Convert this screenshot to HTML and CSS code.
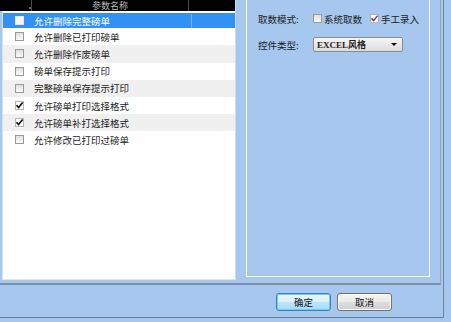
FILE: index.html
```html
<!DOCTYPE html>
<html lang="zh-CN">
<head>
    <meta charset="UTF-8">
    <title>磅单参数设置</title>
    <link rel="stylesheet" href="styles.css">
</head>
<body>

<div class="outer">
    <div class="inner">
        <div class="grid">
            <div class="grid-head">
                <div class="col-check"><span class="dot"></span></div>
                <div class="col-name">参数名称</div>
                <div class="col-rest"></div>
            </div>
            <div class="row selected">
                <div class="col-check"><span class="cb"></span></div>
                <div class="col-name">允许删除完整磅单</div>
                <div class="col-rest"></div>
            </div>
            <div class="row">
                <div class="col-check"><span class="cb"></span></div>
                <div class="col-name">允许删除已打印磅单</div>
                <div class="col-rest"></div>
            </div>
            <div class="row">
                <div class="col-check"><span class="cb"></span></div>
                <div class="col-name">允许删除作废磅单</div>
                <div class="col-rest"></div>
            </div>
            <div class="row">
                <div class="col-check"><span class="cb"></span></div>
                <div class="col-name">磅单保存提示打印</div>
                <div class="col-rest"></div>
            </div>
            <div class="row">
                <div class="col-check"><span class="cb"></span></div>
                <div class="col-name">完整磅单保存提示打印</div>
                <div class="col-rest"></div>
            </div>
            <div class="row">
                <div class="col-check"><span class="cb checked"><svg width="9" height="9" viewBox="0 0 9 9"><path d="M1.5 4.2 L3.6 6.6 L7.6 1.6" fill="none" stroke="#111" stroke-width="1.6"/></svg></span></div>
                <div class="col-name">允许磅单打印选择格式</div>
                <div class="col-rest"></div>
            </div>
            <div class="row">
                <div class="col-check"><span class="cb checked"><svg width="9" height="9" viewBox="0 0 9 9"><path d="M1.5 4.2 L3.6 6.6 L7.6 1.6" fill="none" stroke="#111" stroke-width="1.6"/></svg></span></div>
                <div class="col-name">允许磅单补打选择格式</div>
                <div class="col-rest"></div>
            </div>
            <div class="row">
                <div class="col-check"><span class="cb"></span></div>
                <div class="col-name">允许修改已打印过磅单</div>
                <div class="col-rest"></div>
            </div>
        </div>

        <div class="side">
            <div class="groupbox">
                <div class="field">
                    <span class="label">取数模式:</span>
                    <span class="cb"></span>
                    <span class="opt">系统取数</span>
                    <span class="cb checked"><svg width="9" height="9" viewBox="0 0 9 9"><path d="M1.5 4.2 L3.6 6.6 L7.6 1.6" fill="none" stroke="#7a3a5a" stroke-width="1.5"/></svg></span>
                    <span class="opt">手工录入</span>
                </div>
                <div class="field">
                    <span class="label">控件类型:</span>
                    <div class="select">
                        <span class="select-text">EXCEL风格</span>
                        <span class="arrow"></span>
                    </div>
                </div>
            </div>
        </div>
    </div>

    <div class="btnbar">
        <button class="btn default">确定</button>
        <button class="btn">取消</button>
    </div>
</div>

</body>
</html>
```

FILE: styles.css
```css
body {
    margin: 0;
    width: 451px;
    height: 322px;
    overflow: hidden;
    background-color: #a6c8ee;
    font-family: "Noto Sans CJK SC", "Liberation Sans", sans-serif;
    font-size: 9.5px;
    color: #1a1a1a;
}
.outer {
    width: 443px;
    height: 317px;
    border-right: 1px solid #71839a;
    border-bottom: 1px solid #6c7e95;
    display: flex;
    flex-direction: column;
}
.inner {
    width: 440px;
    height: 283px;
    border-right: 1px solid #8ea2bb;
    border-bottom: 2px solid #7d8ea6;
    display: flex;
}
.grid {
    width: 232px;
    height: 279px;
    margin-left: 2px;
    background-color: #fff;
    border-left: 1px solid #d4e3f4;
    border-bottom: 1px solid #dbe7f5;
    border-right: 1px solid #c9dcf2;
}
.grid-head {
    display: flex;
    height: 11px;
    margin-left: -3px;
    background-color: #000;
    color: #b8b8b8;
    font-size: 9px;
    line-height: 11px;
}
.grid-head .col-check {
    width: 32px;
    border-right: 1px solid #4a4a4a;
}
.grid-head .col-name {
    width: 156px;
    text-align: center;
    border-right: 1px solid #4a4a4a;
    padding: 0;
}
.dot {
    display: block;
    width: 2px;
    height: 2px;
    margin: 4px 0 0 17px;
    background-color: #666;
}
.row {
    display: flex;
    align-items: center;
    height: 17.2px;
}
.row:nth-child(even) {
    background-color: #f0f0f0;
}
.row.selected {
    background-color: #3192f4;
    color: #fff;
    border-top: 2px solid #fff;
    height: 15.2px;
}
.col-check {
    width: 29px;
    display: flex;
    align-items: center;
    padding-left: 12px;
    box-sizing: border-box;
}
.col-name {
    width: 157px;
    padding-left: 2px;
    white-space: nowrap;
    border-right: 1px solid transparent;
}
.row.selected .col-name {
    border-right-color: #7ab8f8;
}
.col-rest {
    flex: 1;
}
.cb {
    display: inline-block;
    width: 9px;
    height: 9px;
    box-sizing: border-box;
    border: 1px solid #9a9a9a;
    background: linear-gradient(#dedede, #fbfbfb);
    position: relative;
}
.row.selected .cb {
    border-color: #e8e8e8;
    background: #fdf4f6;
}
.cb.checked {
    background: #fff;
    border-color: #b5b5b5;
}
.cb svg {
    position: absolute;
    left: -1px;
    top: -1px;
}
.side {
    flex: 1;
    padding: 0 10px 6px 10px;
    display: flex;
}
.groupbox {
    flex: 1;
    border: 1px solid #fff;
    border-top: none;
    padding: 11px 0 0 11px;
}
.field {
    display: flex;
    align-items: center;
    height: 15px;
    margin-bottom: 11px;
}
.label {
    width: 55px;
    white-space: nowrap;
}
.opt {
    margin: 0 8px 0 2px;
    white-space: nowrap;
}
.select {
    width: 90px;
    height: 15px;
    box-sizing: border-box;
    border: 1px solid #8c8c8c;
    border-radius: 2px;
    background: linear-gradient(#f6f6f6, #dcdcdc);
    display: flex;
    align-items: center;
    padding: 0 5px 0 3px;
}
.select-text {
    flex: 1;
    font-family: "Liberation Serif", "Noto Sans CJK SC", serif;
    font-weight: bold;
    font-size: 9px;
    color: #222;
}
.arrow {
    width: 0;
    height: 0;
    border-left: 3px solid transparent;
    border-right: 3px solid transparent;
    border-top: 3px solid #111;
}
.btnbar {
    flex: 1;
    display: flex;
    justify-content: flex-end;
    align-items: flex-start;
    gap: 6px;
    padding: 8px 51px 0 0;
}
.btn {
    width: 55px;
    height: 18px;
    padding: 0;
    font-family: "Noto Sans CJK SC", sans-serif;
    font-size: 9.5px;
    color: #111;
    border: 1px solid #707070;
    border-radius: 3px;
    background: linear-gradient(#f3f3f3 0%, #ebebeb 50%, #dddddd 51%, #cfcfcf 100%);
    box-shadow: inset 0 0 0 1px #fcfcfc;
}
.btn.default {
    border-color: #3c7fb1;
    background: linear-gradient(#eaf6fd 0%, #d9f0fc 50%, #bee6fd 51%, #a7d9f5 100%);
    box-shadow: inset 0 0 0 1px #6fd0f7;
}
```
